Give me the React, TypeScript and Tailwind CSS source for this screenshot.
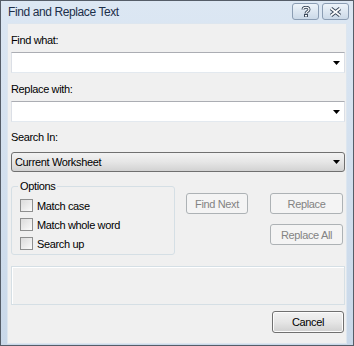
import React from 'react';

const font = { fontFamily: '"Liberation Sans", Arial, sans-serif' };

function Arrow() {
  return (
    <svg width="7" height="4" viewBox="0 0 7 4" className="shrink-0">
      <path d="M0 0H7L3.5 4Z" fill="#000" />
    </svg>
  );
}

function ComboInput() {
  return (
    <div className="h-[21px] w-full flex items-center justify-end pr-[4px] bg-white border border-[#e3e9ef] border-t-[#abadb3] border-l-[#dbdfe6] border-r-[#dbdfe6]">
      <Arrow />
    </div>
  );
}

function CheckRow({ label }: { label: string }) {
  return (
    <label className="h-[19px] flex items-center gap-[4px]">
      <span className="w-[13px] h-[13px] border border-[#8e8f8f] bg-gradient-to-br from-[#dcdcdc] to-[#fbfbfb] p-[2px]">
        <span className="block w-full h-full bg-gradient-to-br from-[#e0e0e0] to-[#f4f4f4]" />
      </span>
      <span>{label}</span>
    </label>
  );
}

function DisabledButton({ label, width }: { label: string; width: string }) {
  return (
    <button
      disabled
      className={`${width} h-[21px] rounded-[3px] border border-[#adb2b5] bg-[#f4f4f4] text-[#838383] flex items-center justify-center`}
    >
      {label}
    </button>
  );
}

export default function App() {
  return (
    <div
      className="w-[354px] h-[346px] border border-[#555d68] bg-gradient-to-b from-[#dce7f3] to-[#c9d8e9] flex flex-col text-[11px] leading-[16px] text-black tracking-[-0.35px]"
      style={font}
    >
      {/* title bar */}
      <div className="h-[22px] flex items-center pl-[7px] pr-[4px] shrink-0">
        <span className="text-[12px] text-[#1c2f4a] tracking-[-0.4px] flex-1">Find and Replace Text</span>
        <div className="flex gap-[3px] self-start mt-[2px]">
          <div className="w-[27px] h-[17px] rounded-[3px] border border-[#8b9db3] bg-gradient-to-b from-[#eef4fa] to-[#cbd9e8] flex items-center justify-center">
            <svg width="10" height="11" viewBox="0 0 10 11">
              <path d="M2 3.5 C2 0.5 8 0.5 8 3.5 C8 5.5 5 5.5 5 7.5" fill="none" stroke="#3c4a5c" strokeWidth="3" />
              <path d="M2 3.5 C2 0.5 8 0.5 8 3.5 C8 5.5 5 5.5 5 7.5" fill="none" stroke="#ffffff" strokeWidth="1.2" />
              <rect x="3.5" y="8.5" width="3" height="2.5" fill="#ffffff" stroke="#3c4a5c" strokeWidth="1" />
            </svg>
          </div>
          <div className="w-[27px] h-[17px] rounded-[3px] border border-[#8b9db3] bg-gradient-to-b from-[#eef4fa] to-[#cbd9e8] flex items-center justify-center">
            <svg width="13" height="10" viewBox="0 0 13 10">
              <path d="M2 1.5L11 8.5M11 1.5L2 8.5" stroke="#3c4a5c" strokeWidth="3.6" />
              <path d="M2 1.5L11 8.5M11 1.5L2 8.5" stroke="#ffffff" strokeWidth="1.6" />
            </svg>
          </div>
        </div>
      </div>

      {/* client area */}
      <div className="ml-[6px] mr-[6px] h-[321px] border border-[#dde6ef] bg-[#f0f0f0] pl-[3px] pr-[1px] flex flex-col">
        <div className="mt-[8px]">Find what:</div>
        <div className="mt-[4px]">
          <ComboInput />
        </div>
        <div className="mt-[8px]">Replace with:</div>
        <div className="mt-[4px]">
          <ComboInput />
        </div>
        <div className="mt-[7px]">Search In:</div>
        <div className="mt-[7px] h-[20px] rounded-[3px] border border-[#707070] bg-gradient-to-b from-[#f2f2f2] via-[#e6e6e6] to-[#d2d2d2] flex items-center pl-[3px] pr-[4px]">
          <span className="flex-1">Current Worksheet</span>
          <Arrow />
        </div>

        <div className="mt-[6px] flex">
          <fieldset className="w-[164px] border border-[#d5dfe5] rounded-[3px] pl-[8px] pb-[1px]">
            <legend className="-ml-[2px] px-[2px]">Options</legend>
            <div className="flex flex-col pt-[2px]">
              <CheckRow label="Match case" />
              <CheckRow label="Match whole word" />
              <CheckRow label="Search up" />
            </div>
          </fieldset>
          <div className="ml-[11px] mt-[15px] flex flex-col gap-[10px]">
            <div className="flex gap-[22px]">
              <DisabledButton label="Find Next" width="w-[62px]" />
              <DisabledButton label="Replace" width="w-[73px]" />
            </div>
            <div className="flex justify-end">
              <DisabledButton label="Replace All" width="w-[73px]" />
            </div>
          </div>
        </div>

        <div className="mt-[11px] h-[39px] border border-[#d5dfe5] shadow-[inset_1px_1px_0_#ffffff]" />

        <div className="mt-[6px] flex justify-end pr-[1px]">
          <button className="w-[72px] h-[22px] rounded-[3px] border border-[#707070] bg-gradient-to-b from-[#f2f2f2] via-[#e6e6e6] to-[#d0d0d0] shadow-[inset_0_0_0_1px_#fcfcfc] text-black">
            Cancel
          </button>
        </div>
      </div>
    </div>
  );
}
